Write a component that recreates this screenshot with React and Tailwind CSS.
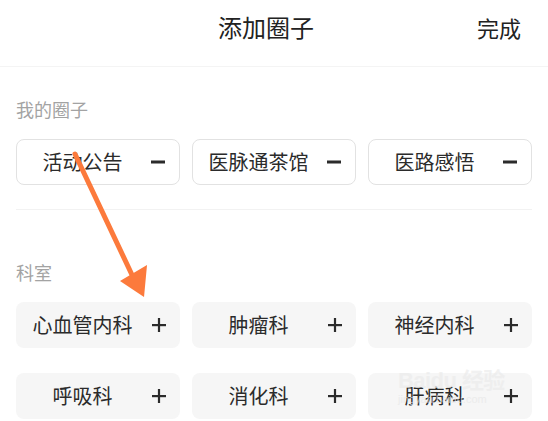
import React from 'react';

const myCircles = ['活动公告', '医脉通茶馆', '医路感悟'];
const departments = ['心血管内科', '肿瘤科', '神经内科', '呼吸科', '消化科', '肝病科'];

const MinusIcon = () => (
  <svg width="14" height="14" viewBox="0 0 14 14" className="shrink-0">
    <rect x="0" y="5.5" width="14" height="3" fill="#2b2b2b" />
  </svg>
);

const PlusIcon = () => (
  <svg width="14" height="14" viewBox="0 0 14 14" className="shrink-0">
    <rect x="0" y="6" width="14" height="2.2" fill="#2b2b2b" />
    <rect x="5.9" y="0" width="2.2" height="14" fill="#2b2b2b" />
  </svg>
);

const Chip = ({ label, mine }) => (
  <div
    className={
      mine
        ? 'flex h-[46px] items-center rounded-[8px] border border-[#e2e2e2] bg-white pr-[14px]'
        : 'flex h-[46px] items-center rounded-[8px] bg-[#f6f6f6] pr-[14px]'
    }
  >
    <span className="flex-1 text-center text-[20px] leading-none text-[#2b2b2b]">{label}</span>
    <span className="ml-[3px]">{mine ? <MinusIcon /> : <PlusIcon />}</span>
  </div>
);

const App = () => {
  return (
    <div
      className="relative h-[421px] w-[548px] overflow-hidden bg-white"
      style={{ fontFamily: '"Noto Sans CJK SC", "Noto Sans", sans-serif' }}
    >
      {/* header */}
      <div className="flex h-[67px] items-center justify-between border-b border-[#f4f4f4] pb-[12px] pl-[218px] pr-[27px]">
        <h1 className="text-[24px] leading-none text-[#222]">添加圈子</h1>
        <button className="text-[22px] leading-none text-[#222]">完成</button>
      </div>

      {/* my circles */}
      <div className="px-4 pt-[30px]">
        <p className="text-[18px] leading-[24px] text-[#a3a3a3]">我的圈子</p>
        <div className="mt-[18px] grid grid-cols-3 gap-x-3">
          {myCircles.map((c) => (
            <Chip key={c} label={c} mine />
          ))}
        </div>
        <div className="mt-[24px] h-px bg-[#f2f2f2]"></div>
      </div>

      {/* departments */}
      <div className="px-4 pt-[50px]">
        <p className="text-[18px] leading-[24px] text-[#a3a3a3]">科室</p>
        <div className="mt-[18px] grid grid-cols-3 gap-x-3 gap-y-[25px]">
          {departments.map((d) => (
            <Chip key={d} label={d} />
          ))}
        </div>
      </div>

      {/* annotation arrow */}
      <svg className="pointer-events-none absolute left-0 top-0" width="548" height="421">
        <line x1="75" y1="154" x2="133" y2="277" stroke="#fc7a3c" strokeWidth="5" strokeLinecap="round" />
        <polygon points="120,281 147,265 144,297" fill="#fc7a3c" />
      </svg>

      {/* watermark */}
      <div className="pointer-events-none absolute left-[398px] top-[370px] flex flex-col items-start opacity-70">
        <span className="text-[22px] font-bold leading-none tracking-tight text-[#ececec]" style={{ fontFamily: '"Liberation Sans", "Noto Sans CJK SC", sans-serif' }}>
          Baidu 经验
        </span>
        <span className="mt-[2px] text-[11px] leading-none text-[#e8e8e8]" style={{ fontFamily: '"Liberation Sans", sans-serif' }}>
          jingyan.baidu.com
        </span>
      </div>
    </div>
  );
};

export default App;
